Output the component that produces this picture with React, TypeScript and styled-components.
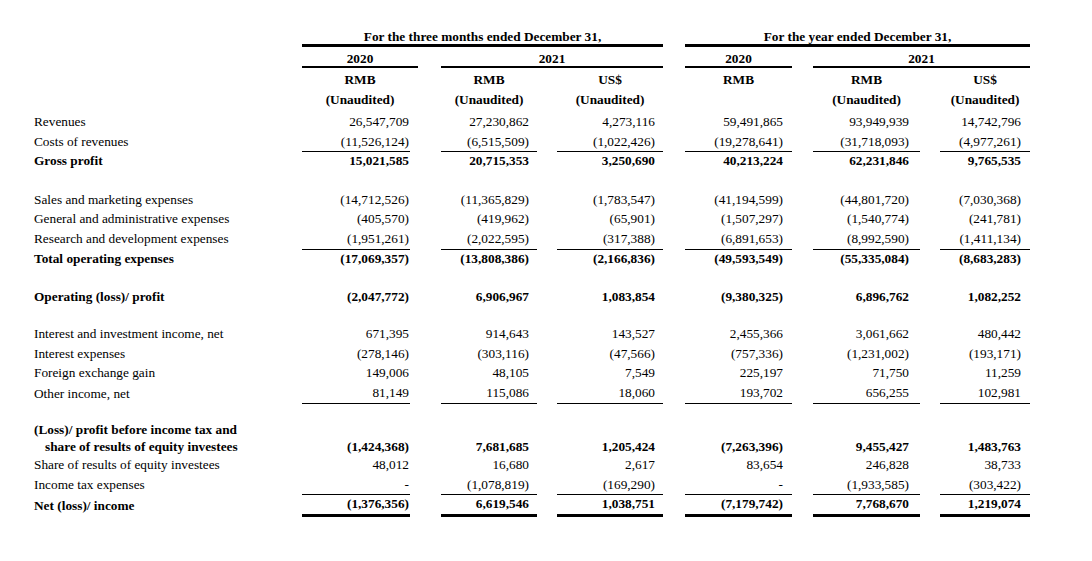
import React from "react";
import styled, { createGlobalStyle } from "styled-components";

const GlobalStyle = createGlobalStyle`
  html, body { margin: 0; padding: 0; background: #ffffff; }
  body {
    font-family: "Liberation Serif", "Times New Roman", serif;
    color: #000000;
    font-size: 13.3px;
  }
  * { box-sizing: border-box; }
`;

const COLS = "268px 116px 23px 96px 20px 106px 22px 107px 21px 107px 20px 90px";

const Sheet = styled.div`
  padding: 29px 0 40px 34px;
  width: 1092px;
`;

const Row = styled.div<{ $h?: number; $pt?: number }>`
  display: grid;
  grid-template-columns: ${COLS};
  height: ${(p) => (p.$h !== undefined ? `${p.$h}px` : "auto")};
  padding-top: ${(p) => p.$pt ?? 0}px;
`;

const HeadCell = styled.div<{ $from: number; $to: number; $rule: number; $lh: number }>`
  grid-column: ${(p) => p.$from} / ${(p) => p.$to};
  text-align: center;
  font-weight: bold;
  line-height: ${(p) => p.$lh}px;
  white-space: nowrap;
  border-bottom: ${(p) => (p.$rule ? `${p.$rule}px solid #000` : "none")};
`;

const Label = styled.div<{ $bold?: boolean; $lh?: number }>`
  grid-column: 1;
  display: flex;
  flex-direction: column;
  justify-content: center;
  font-weight: ${(p) => (p.$bold ? "bold" : "normal")};
  line-height: ${(p) => p.$lh ?? 19.6}px;
  white-space: nowrap;
`;

const Indented = styled.span`
  padding-left: 11px;
`;

const Num = styled.div<{
  $col: number;
  $trim: number;
  $pad: number;
  $bold?: boolean;
  $rule?: "single" | "thick";
  $bottom?: boolean;
  $lh?: number;
}>`
  grid-column: ${(p) => p.$col};
  margin-right: ${(p) => p.$trim}px;
  padding-right: ${(p) => p.$pad}px;
  display: flex;
  justify-content: flex-end;
  align-items: ${(p) => (p.$bottom ? "flex-end" : "center")};
  line-height: ${(p) => p.$lh ?? 19.6}px;
  font-weight: ${(p) => (p.$bold ? "bold" : "normal")};
  white-space: nowrap;
  border-bottom: ${(p) =>
    p.$rule === "single" ? "1px solid #000" : p.$rule === "thick" ? "3px solid #000" : "none"};
`;

const Spacer = styled.div<{ $h: number }>`
  height: ${(p) => p.$h}px;
`;

const DATA_COLS = [
  { col: 2, trim: 8, pad: 1 },
  { col: 4, trim: 0, pad: 8 },
  { col: 6, trim: 0, pad: 8 },
  { col: 8, trim: 0, pad: 9 },
  { col: 10, trim: 0, pad: 11 },
  { col: 12, trim: 0, pad: 9 },
];

type DataRow = {
  kind: "data";
  label: React.ReactNode;
  vals: string[];
  bold?: boolean;
  rule?: "single" | "thick";
  two?: boolean;
};
type GapRow = { kind: "gap"; h: number };

const ROWS: (DataRow | GapRow)[] = [
  { kind: "data", label: "Revenues", vals: ["26,547,709", "27,230,862", "4,273,116", "59,491,865", "93,949,939", "14,742,796"] },
  { kind: "data", label: "Costs of revenues", rule: "single", vals: ["(11,526,124)", "(6,515,509)", "(1,022,426)", "(19,278,641)", "(31,718,093)", "(4,977,261)"] },
  { kind: "data", label: "Gross profit", bold: true, vals: ["15,021,585", "20,715,353", "3,250,690", "40,213,224", "62,231,846", "9,765,535"] },
  { kind: "gap", h: 19 },
  { kind: "data", label: "Sales and marketing expenses", vals: ["(14,712,526)", "(11,365,829)", "(1,783,547)", "(41,194,599)", "(44,801,720)", "(7,030,368)"] },
  { kind: "data", label: "General and administrative expenses", vals: ["(405,570)", "(419,962)", "(65,901)", "(1,507,297)", "(1,540,774)", "(241,781)"] },
  { kind: "data", label: "Research and development expenses", rule: "single", vals: ["(1,951,261)", "(2,022,595)", "(317,388)", "(6,891,653)", "(8,992,590)", "(1,411,134)"] },
  { kind: "data", label: "Total operating expenses", bold: true, vals: ["(17,069,357)", "(13,808,386)", "(2,166,836)", "(49,593,549)", "(55,335,084)", "(8,683,283)"] },
  { kind: "gap", h: 19 },
  { kind: "data", label: "Operating (loss)/ profit", bold: true, vals: ["(2,047,772)", "6,906,967", "1,083,854", "(9,380,325)", "6,896,762", "1,082,252"] },
  { kind: "gap", h: 17.5 },
  { kind: "data", label: "Interest and investment income, net", vals: ["671,395", "914,643", "143,527", "2,455,366", "3,061,662", "480,442"] },
  { kind: "data", label: "Interest expenses", vals: ["(278,146)", "(303,116)", "(47,566)", "(757,336)", "(1,231,002)", "(193,171)"] },
  { kind: "data", label: "Foreign exchange gain", vals: ["149,006", "48,105", "7,549", "225,197", "71,750", "11,259"] },
  { kind: "data", label: "Other income, net", rule: "single", vals: ["81,149", "115,086", "18,060", "193,702", "656,255", "102,981"] },
  { kind: "gap", h: 17.5 },
  {
    kind: "data",
    two: true,
    bold: true,
    label: (
      <>
        <span>(Loss)/ profit before income tax and</span>
        <Indented>share of results of equity investees</Indented>
      </>
    ),
    vals: ["(1,424,368)", "7,681,685", "1,205,424", "(7,263,396)", "9,455,427", "1,483,763"],
  },
  { kind: "data", label: "Share of results of equity investees", vals: ["48,012", "16,680", "2,617", "83,654", "246,828", "38,733"] },
  { kind: "data", label: "Income tax expenses", rule: "single", vals: ["-", "(1,078,819)", "(169,290)", "-", "(1,933,585)", "(303,422)"] },
  { kind: "data", label: "Net (loss)/ income", bold: true, rule: "thick", vals: ["(1,376,356)", "6,619,546", "1,038,751", "(7,179,742)", "7,768,670", "1,219,074"] },
];

const UNITS = ["RMB", "RMB", "US$", "RMB", "RMB", "US$"];
const AUDIT = ["(Unaudited)", "(Unaudited)", "(Unaudited)", "", "(Unaudited)", "(Unaudited)"];

export default function App() {
  return (
    <>
      <GlobalStyle />
      <Sheet>
        <Row>
          <HeadCell $from={2} $to={7} $rule={3} $lh={15}>For the three months ended December 31,</HeadCell>
          <HeadCell $from={8} $to={13} $rule={3} $lh={15}>For the year ended December 31,</HeadCell>
        </Row>
        <Row $pt={4}>
          <HeadCell $from={2} $to={3} $rule={2} $lh={15}>2020</HeadCell>
          <HeadCell $from={4} $to={7} $rule={2} $lh={15}>2021</HeadCell>
          <HeadCell $from={8} $to={9} $rule={2} $lh={15}>2020</HeadCell>
          <HeadCell $from={10} $to={13} $rule={2} $lh={15}>2021</HeadCell>
        </Row>
        <Row $pt={2}>
          {DATA_COLS.map((c, i) => (
            <HeadCell key={i} $from={c.col} $to={c.col + 1} $rule={0} $lh={20}>{UNITS[i]}</HeadCell>
          ))}
        </Row>
        <Row>
          {DATA_COLS.map((c, i) => (
            <HeadCell key={i} $from={c.col} $to={c.col + 1} $rule={0} $lh={20}>{AUDIT[i]}</HeadCell>
          ))}
        </Row>
        <Spacer $h={2} />
        {ROWS.map((r, ri) =>
          r.kind === "gap" ? (
            <Spacer key={ri} $h={r.h} />
          ) : (
            <Row key={ri} $h={r.two ? 35 : 19.6} $pt={r.two ? 1 : 0}>
              <Label $bold={r.bold} $lh={r.two ? 17 : 19.6}>{r.label}</Label>
              {DATA_COLS.map((c, i) => (
                <Num
                  key={i}
                  $col={c.col}
                  $trim={c.trim}
                  $pad={c.pad}
                  $bold={r.bold}
                  $rule={r.rule}
                  $bottom={r.two}
                  $lh={r.two ? 17 : 19.6}
                >
                  {r.vals[i]}
                </Num>
              ))}
            </Row>
          )
        )}
      </Sheet>
    </>
  );
}
